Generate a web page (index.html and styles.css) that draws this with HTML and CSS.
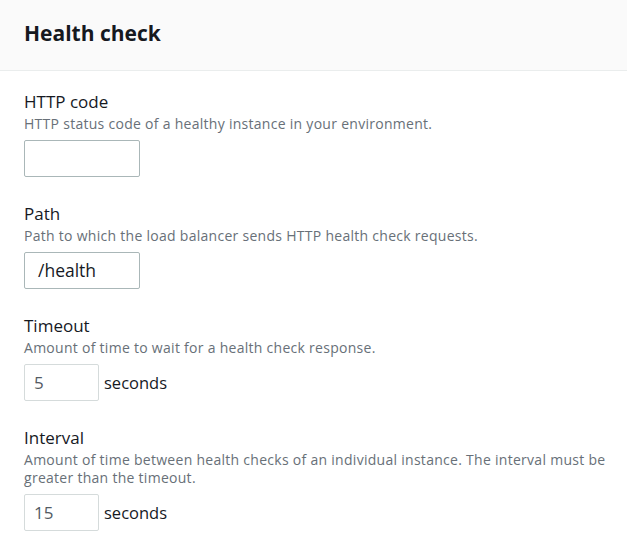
FILE: index.html
```html
<!DOCTYPE html>
<html>
<head>
<meta charset="utf-8">
<link rel="stylesheet" href="styles.css">
</head>
<body>
<div class="panel">
  <div class="header"><h2 class="title">Health check</h2></div>
  <div class="content">
    <div class="field">
      <div class="label">HTTP code</div>
      <div class="desc">HTTP status code of a healthy instance in your environment.</div>
      <div class="control"><div class="input wide"></div></div>
    </div>
    <div class="field">
      <div class="label">Path</div>
      <div class="desc">Path to which the load balancer sends HTTP health check requests.</div>
      <div class="control"><div class="input wide">/health</div></div>
    </div>
    <div class="field">
      <div class="label">Timeout</div>
      <div class="desc">Amount of time to wait for a health check response.</div>
      <div class="control"><div class="input narrow muted">5</div><span class="unit">seconds</span></div>
    </div>
    <div class="field spaced">
      <div class="label">Interval</div>
      <div class="desc">Amount of time between health checks of an individual instance. The interval must be greater than the timeout.</div>
      <div class="control"><div class="input narrow muted">15</div><span class="unit">seconds</span></div>
    </div>
  </div>
</div>
</body>
</html>
```

FILE: styles.css
```css
html, body {
  margin: 0;
  padding: 0;
  background: #ffffff;
}
body {
  font-family: "Open Sans", "Noto Sans", sans-serif;
  color: #16191f;
}
.panel {
  width: 627px;
}
.header {
  background: #fafafa;
  border-bottom: 1px solid #eaeded;
  height: 71px;
  box-sizing: border-box;
  padding: 20px 24px 0 24px;
}
.title {
  margin: 0;
  font-size: 21px;
  font-weight: 700;
  color: #16191f;
  line-height: 26px;
}
.content {
  padding: 20px 19px 0 24px;
}
.field {
  margin-bottom: 26px;
}
.field.spaced {
  margin-top: 6px;
}
.label {
  font-size: 17px;
  line-height: 22px;
  margin-bottom: 2px;
  color: #16191f;
}
.desc {
  font-size: 14px;
  line-height: 18px;
  letter-spacing: 0.28px;
  color: #687078;
}
.control {
  display: flex;
  align-items: center;
  margin-top: 7px;
}
.input {
  box-sizing: border-box;
  height: 37px;
  border: 1px solid #aab7b8;
  border-radius: 2px;
  padding: 0 13px;
  font-size: 17.5px;
  line-height: 35px;
  color: #16191f;
  background: #fff;
}
.input.wide {
  width: 116px;
}
.input.narrow {
  width: 75px;
  padding: 0 9px;
  font-size: 17px;
}
.input.muted {
  border-color: #d5dbdb;
  color: #545b64;
}
.unit {
  margin-left: 5px;
  font-size: 16.5px;
  color: #16191f;
}
```
